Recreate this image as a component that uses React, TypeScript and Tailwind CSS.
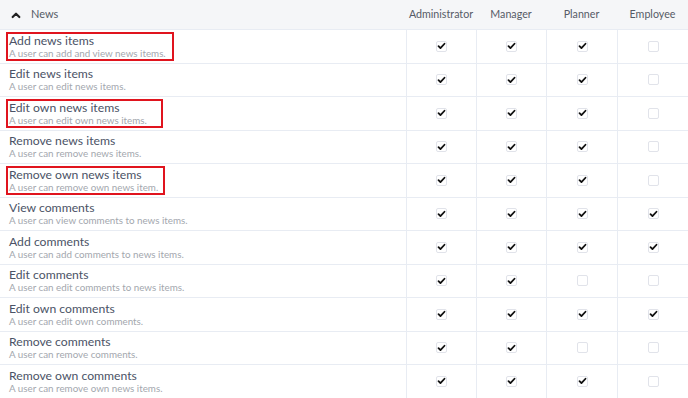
import React from 'react';

type Perm = {
  title: string;
  desc: string;
  roles: boolean[];
  mark?: number;
};

const perms: Perm[] = [
  { title: 'Add news items', desc: 'A user can add and view news items.', roles: [true, true, true, false], mark: 168 },
  { title: 'Edit news items', desc: 'A user can edit news items.', roles: [true, true, true, false] },
  { title: 'Edit own news items', desc: 'A user can edit own news items.', roles: [true, true, true, false], mark: 157 },
  { title: 'Remove news items', desc: 'A user can remove news items.', roles: [true, true, true, false] },
  { title: 'Remove own news items', desc: 'A user can remove own news item.', roles: [true, true, true, false], mark: 159 },
  { title: 'View comments', desc: 'A user can view comments to news items.', roles: [true, true, true, true] },
  { title: 'Add comments', desc: 'A user can add comments to news items.', roles: [true, true, true, true] },
  { title: 'Edit comments', desc: 'A user can edit comments to news items.', roles: [true, true, false, false] },
  { title: 'Edit own comments', desc: 'A user can edit own comments.', roles: [true, true, true, true] },
  { title: 'Remove comments', desc: 'A user can remove comments.', roles: [true, true, false, false] },
  { title: 'Remove own comments', desc: 'A user can remove own news items.', roles: [true, true, true, false] },
];

const roles = ['Administrator', 'Manager', 'Planner', 'Employee'];

const Check = ({ on }: { on: boolean }) => (
  <span className="flex h-[11px] w-[11px] items-center justify-center rounded-[2px] border border-[#e1e3ea] bg-white">
    {on && (
      <svg viewBox="0 0 12 12" className="h-[10px] w-[10px]">
        <path d="M2 6.2 L4.6 8.8 L10 3" fill="none" stroke="#111" strokeWidth="2.4" strokeLinecap="round" strokeLinejoin="round" />
      </svg>
    )}
  </span>
);

const App: React.FC = () => {
  return (
    <div className="w-[688px] h-[398px] overflow-hidden bg-white" style={{ fontFamily: 'Lato, sans-serif' }}>
      {/* Header */}
      <div className="grid grid-cols-[406px_70px_70px_71px_71px] h-[30px] bg-[#f5f6f8] border-b border-[#e8ecf3]">
        <div className="flex items-center gap-[10px] pl-[11px] text-[11px] text-[#555b66]">
          <svg viewBox="0 0 12 12" className="h-[10px] w-[10px]">
            <path d="M2 8.5 L6 4.5 L10 8.5" fill="none" stroke="#222" strokeWidth="2.6" strokeLinecap="round" strokeLinejoin="round" />
          </svg>
          News
        </div>
        {roles.map((r) => (
          <div key={r} className="flex items-center justify-center text-[10.7px] text-[#555b66]">
            {r}
          </div>
        ))}
      </div>

      {perms.map((p) => (
        <div key={p.title} className="grid grid-cols-[406px_70px_70px_71px_71px] h-[33.5px] border-b border-[#e8ecf3]">
          <div className="flex items-center pl-[6px]">
            <div
              className={`flex h-[29px] flex-col justify-center whitespace-nowrap px-[1px] border-2 ${p.mark ? 'border-[#e0141e]' : 'border-transparent'}`}
              style={p.mark ? { width: p.mark } : undefined}
            >
              <div className="text-[12.2px] leading-[13px] text-[#4b5366]">{p.title}</div>
              <div className="text-[9.8px] leading-[12px] text-[#a3a7ae]">{p.desc}</div>
            </div>
          </div>
          {p.roles.map((on, i) => (
            <div key={i} className="flex items-center justify-center border-l border-[#e8ecf3]">
              <Check on={on} />
            </div>
          ))}
        </div>
      ))}
    </div>
  );
};

export default App;
